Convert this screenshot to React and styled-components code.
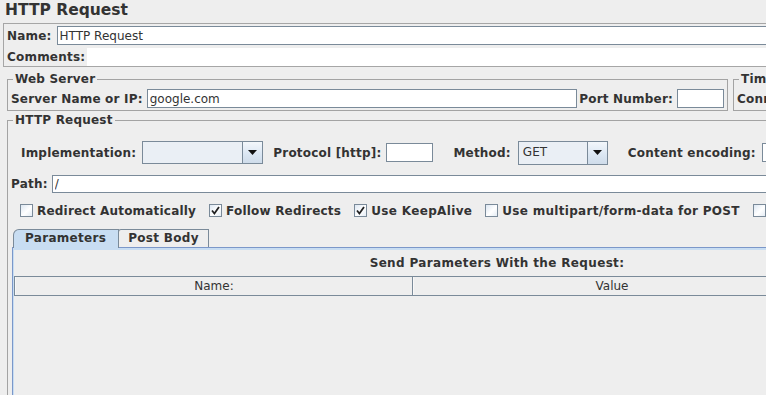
import React from 'react'
import styled, { createGlobalStyle } from 'styled-components'

const GlobalStyle = createGlobalStyle`
  html, body {
    margin: 0;
    padding: 0;
    background: #eeeeee;
    overflow: hidden;
  }
  body {
    font-family: 'DejaVu Sans', 'Liberation Sans', sans-serif;
    font-size: 12px;
    color: #333333;
  }
`

const Page = styled.div`
  width: 1000px;
  height: 395px;
  overflow: hidden;
`

const Title = styled.div`
  height: 23px;
  line-height: 21px;
  padding-left: 5px;
  font-size: 15.5px;
  font-weight: bold;
`

const NameBox = styled.div`
  margin-left: 3px;
  border: 1px solid #a6a6a6;
  padding: 2px 0 0 3px;
  display: flex;
  flex-direction: column;
  gap: 2px;
`

const Row = styled.div`
  display: flex;
  align-items: center;
  height: ${p => p.$h || 19}px;
  margin-top: ${p => p.$mt || 0}px;
  padding-left: ${p => p.$pl || 0}px;
  padding-right: ${p => p.$pr || 0}px;
`

const Label = styled.span`
  font-weight: bold;
  white-space: nowrap;
  line-height: 14px;
  letter-spacing: 0.2px;
  margin-left: ${p => p.$ml || 0}px;
`

const Field = styled.input`
  box-sizing: border-box;
  height: ${p => p.$h || 19}px;
  width: ${p => (p.$w ? `${p.$w}px` : 'auto')};
  flex: ${p => (p.$w ? 'none' : '1 1 auto')};
  min-width: 0;
  margin: 0 0 0 ${p => p.$ml || 0}px;
  padding: 0 2px;
  border: 1px solid #7a8a99;
  background: #ffffff;
  font-family: 'DejaVu Sans', sans-serif;
  font-size: 12px;
  color: #333333;
  outline: none;
`

const CommentArea = styled.div`
  flex: 1 1 auto;
  height: 18px;
  margin-left: ${p => p.$ml || 0}px;
  background: #ffffff;
`

const GroupRow = styled.div`
  display: flex;
  margin-top: ${p => p.$mt || 0}px;
  padding-left: 7px;
`

const Group = styled.fieldset`
  box-sizing: border-box;
  margin: 0 0 0 ${p => p.$ml || 0}px;
  padding: 0;
  min-width: 0;
  border: 1px solid #a3a3a3;
  flex: ${p => (p.$w ? `0 0 ${p.$w}px` : '1 1 auto')};
  height: ${p => (p.$fill ? '300px' : 'auto')};
  display: flex;
  flex-direction: column;
`

const Legend = styled.legend`
  margin-left: 5px;
  padding: 0 2px;
  font-weight: bold;
  line-height: 14px;
  letter-spacing: 0.2px;
  white-space: nowrap;
`

const Combo = styled.div`
  box-sizing: border-box;
  display: flex;
  width: ${p => p.$w}px;
  height: ${p => p.$h || 23}px;
  margin-left: ${p => p.$ml || 0}px;
  border: 1px solid #7a8a99;
  background: #eaeff5;
  flex: none;
`

const ComboValue = styled.div`
  flex: 1;
  padding-left: 4px;
  line-height: 21px;
  color: #333333;
`

const ComboButton = styled.div`
  width: 19px;
  border-left: 1px solid #7a8a99;
  background: linear-gradient(180deg, #f3f7fb 0%, #dce7f3 55%, #cfdcea 100%);
  display: flex;
  align-items: center;
  justify-content: center;
`

const CheckRow = styled.div`
  display: flex;
  align-items: center;
  height: 21px;
  margin-top: 7px;
  padding-left: 12px;
  gap: 13px;
  white-space: nowrap;
`

const CheckItem = styled.label`
  display: flex;
  align-items: center;
  gap: 4px;
  font-weight: bold;
  letter-spacing: ${p => p.$ls || 0.2}px;
`

const Box = styled.span`
  box-sizing: border-box;
  width: 13px;
  height: 13px;
  border: 1px solid #7a8a99;
  background: linear-gradient(135deg, #dde7f2 0%, #ffffff 55%, #e4ecf4 100%);
  display: flex;
  align-items: center;
  justify-content: center;
`

const TabStrip = styled.div`
  display: flex;
  align-items: flex-end;
  margin-top: 8px;
  padding-left: 5px;
  height: 18px;
  position: relative;
  z-index: 1;
`

const Tab = styled.div`
  box-sizing: border-box;
  height: ${p => (p.$active ? 19 : 18)}px;
  margin-bottom: ${p => (p.$active ? -1 : 0)}px;
  margin-left: ${p => (p.$active ? 0 : -1)}px;
  padding: 0 ${p => p.$pr}px 0 ${p => p.$pl}px;
  border: 1px solid #7a8a99;
  border-bottom: none;
  border-top-left-radius: ${p => (p.$active ? 6 : 3)}px;
  background: ${p => (p.$active ? '#c8ddf2' : '#eeeeee')};
  font-weight: bold;
  letter-spacing: 0.3px;
  line-height: 17px;
`

const TabBody = styled.div`
  flex: 1;
  margin-left: 4px;
  border-top: 1px solid #7b97c9;
  border-left: 1px solid #7b97c9;
  box-shadow: inset 1px 2px 0 #c8ddf2;
  display: flex;
  flex-direction: column;
`

const Caption = styled.div`
  margin-top: 8px;
  padding-right: 8px;
  text-align: center;
  font-weight: bold;
  letter-spacing: 0.35px;
  line-height: 14px;
`

const Header = styled.div`
  display: flex;
  width: 797px;
  height: 20px;
  margin: 6px 0 0 1px;
  box-sizing: border-box;
  border-top: 1px solid #7a8a99;
  border-bottom: 1px solid #7a8a99;
  border-left: 1px solid #7a8a99;
`

const HeadCell = styled.div`
  flex: 1;
  text-align: center;
  line-height: 18px;
  border-right: 1px solid #7a8a99;
  border-left: 1px solid #f8f8f8;
`

function Arrow() {
  return (
    <svg width="9" height="5" viewBox="0 0 9 5">
      <polygon points="0,0 9,0 4.5,5" fill="#111111" />
    </svg>
  )
}

function Check({ checked }) {
  return (
    <Box>
      {checked && (
        <svg width="9" height="9" viewBox="0 0 9 9">
          <path d="M1 4.5 L3.4 7.5 L8 1" fill="none" stroke="#222222" strokeWidth="1.8" />
        </svg>
      )}
    </Box>
  )
}

export default function App() {
  return (
    <Page>
      <GlobalStyle />
      <Title>HTTP Request</Title>

      <NameBox>
        <Row>
          <Label>Name:</Label>
          <Field $ml={5} readOnly defaultValue="HTTP Request" />
        </Row>
        <Row>
          <Label>Comments:</Label>
          <CommentArea $ml={2} />
        </Row>
      </NameBox>

      <GroupRow $mt={5}>
        <Group $w={721}>
          <Legend>Web Server</Legend>
          <Row $mt={3} $pl={3} $pr={3} style={{ marginBottom: 2 }}>
            <Label>Server Name or IP:</Label>
            <Field $ml={4} readOnly defaultValue="google.com" />
            <Label $ml={2}>Port Number:</Label>
            <Field $ml={4} $w={47} readOnly defaultValue="" />
          </Row>
        </Group>
        <Group $ml={5}>
          <Legend>Timeouts (milliseconds)</Legend>
          <Row $mt={3} $pl={3} $pr={3}>
            <Label>Connect:</Label>
            <Field $ml={5} $w={47} readOnly defaultValue="" />
            <Label $ml={6}>Response:</Label>
            <Field $ml={5} $w={47} readOnly defaultValue="" />
          </Row>
        </Group>
      </GroupRow>

      <GroupRow $mt={2}>
        <Group $w={983} $fill>
          <Legend>HTTP Request</Legend>
          <Row $h={23} $mt={14} $pl={13}>
            <Label>Implementation:</Label>
            <Combo $w={121} $ml={6}>
              <ComboValue />
              <ComboButton><Arrow /></ComboButton>
            </Combo>
            <Label $ml={10}>Protocol [http]:</Label>
            <Field $ml={5} $w={47} $h={19} readOnly defaultValue="" />
            <Label $ml={20}>Method:</Label>
            <Combo $w={90} $ml={7} $h={24}>
              <ComboValue>GET</ComboValue>
              <ComboButton><Arrow /></ComboButton>
            </Combo>
            <Label $ml={20}>Content encoding:</Label>
            <Field $ml={6} $w={47} $h={19} readOnly defaultValue="" />
          </Row>

          <Row $h={18} $mt={11} $pl={3}>
            <Label>Path:</Label>
            <Field $ml={4} $h={18} readOnly defaultValue="/" />
          </Row>

          <CheckRow>
            <CheckItem><Check />Redirect Automatically</CheckItem>
            <CheckItem><Check checked />Follow Redirects</CheckItem>
            <CheckItem $ls={0.35}><Check checked />Use KeepAlive</CheckItem>
            <CheckItem $ls={0.3}><Check />Use multipart/form-data for POST</CheckItem>
            <CheckItem><Check />Browser-compatible headers</CheckItem>
          </CheckRow>

          <TabStrip>
            <Tab $active $pl={11} $pr={12}>Parameters</Tab>
            <Tab $pl={9} $pr={9}>Post Body</Tab>
          </TabStrip>
          <TabBody>
            <Caption>Send Parameters With the Request:</Caption>
            <Header>
              <HeadCell>Name:</HeadCell>
              <HeadCell>Value</HeadCell>
            </Header>
          </TabBody>
        </Group>
      </GroupRow>
    </Page>
  )
}
